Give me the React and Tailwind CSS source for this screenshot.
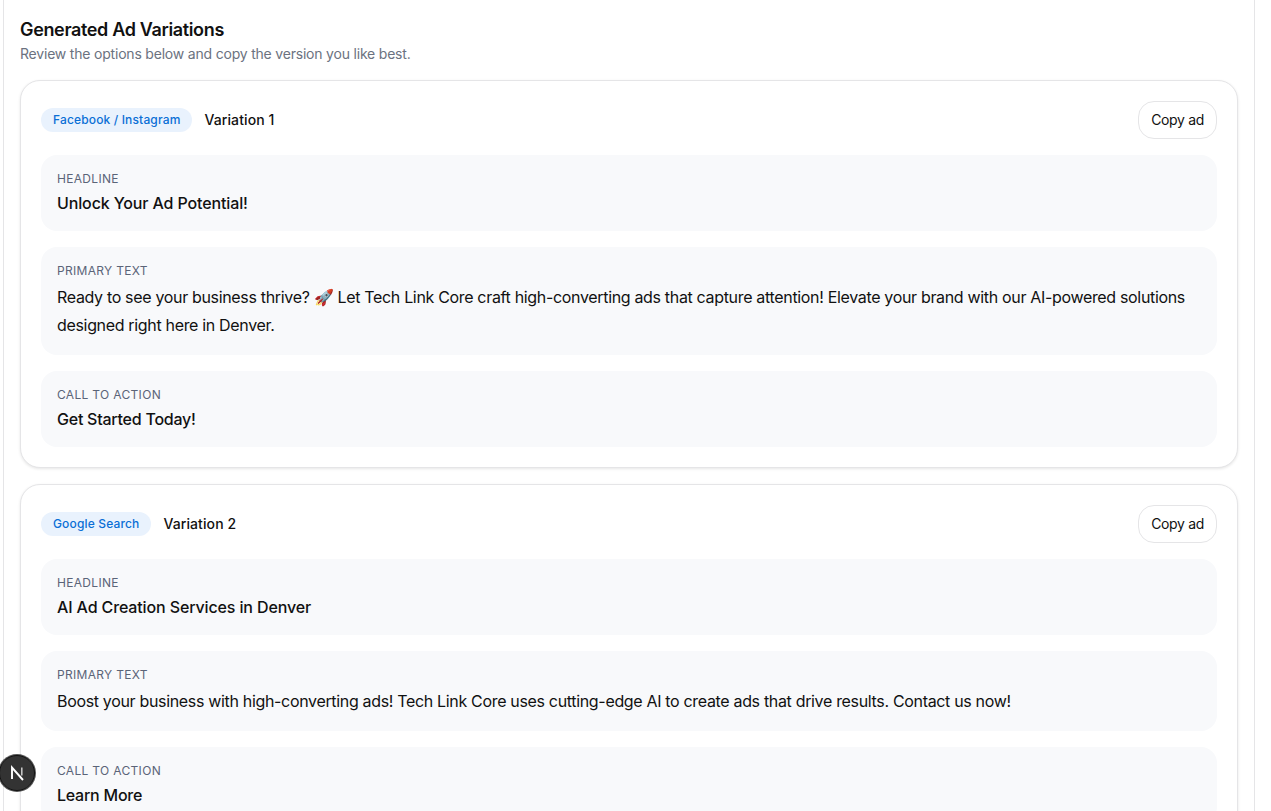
import React from "react";

const ads = [
  {
    platform: "Facebook / Instagram",
    name: "Variation 1",
    headline: "Unlock Your Ad Potential!",
    primary:
      "Ready to see your business thrive? 🚀 Let Tech Link Core craft high-converting ads that capture attention! Elevate your brand with our AI-powered solutions designed right here in Denver.",
    cta: "Get Started Today!",
  },
  {
    platform: "Google Search",
    name: "Variation 2",
    headline: "AI Ad Creation Services in Denver",
    primary:
      "Boost your business with high-converting ads! Tech Link Core uses cutting-edge AI to create ads that drive results. Contact us now!",
    cta: "Learn More",
  },
];

const Field = ({ label, children }) => {
  return (
    <div className="rounded-2xl bg-[#f8f9fb] p-4">
      <div className="text-xs leading-4 tracking-[0.32px] text-[#5b6478]">{label}</div>
      <div className="mt-1">{children}</div>
    </div>
  );
};

const AdCard = ({ ad }) => {
  return (
    <div className="flex flex-col gap-4 rounded-[20px] border border-[#e5e5e7] bg-white p-5 shadow-[0_1px_3px_rgba(0,0,0,0.1)]">
      <div className="flex items-center justify-between">
        <div className="flex items-center gap-3">
          <span className="rounded-full bg-[#e9f2fd] px-3 py-1 text-xs leading-4 font-medium tracking-[0.15px] text-[#0a6fd6]">
            {ad.platform}
          </span>
          <span className="text-sm font-medium tracking-[0.1px] text-[#111111]">{ad.name}</span>
        </div>
        <button className="h-[38px] rounded-2xl border border-[#e5e5e7] bg-white px-3 text-sm tracking-[-0.33px] text-[#111111]">
          Copy ad
        </button>
      </div>
      <Field label="HEADLINE">
        <p className="text-base leading-6 font-medium tracking-[-0.13px] text-[#111111]">{ad.headline}</p>
      </Field>
      <Field label="PRIMARY TEXT">
        <p className="text-base leading-7 tracking-[-0.33px] text-[#111111]">{ad.primary}</p>
      </Field>
      <Field label="CALL TO ACTION">
        <p className="text-base leading-6 font-medium tracking-[-0.24px] text-[#111111]">{ad.cta}</p>
      </Field>
    </div>
  );
};

const NextBadge = () => {
  return (
    <div className="fixed bottom-[20px] left-[-1px] flex h-9 w-9 items-center justify-center rounded-full border border-[#111111] bg-[#333333] shadow-[0_0_0_1px_#555555]">
      <svg width="18" height="18" viewBox="0 0 18 18" fill="none">
        <path d="M4 15V3.5L15 16" stroke="#ffffff" strokeWidth="1.9" />
        <path d="M13.8 3.5v8" stroke="#c4c4c4" strokeWidth="1.6" />
      </svg>
    </div>
  );
};

export default function App() {
  return (
    <div className="h-screen overflow-hidden bg-white font-['Inter',sans-serif]">
      <div className="mx-[3px] w-[1252px] border-x border-[#e5e5e7] px-4 pt-5">
        <h2 className="text-lg leading-5 font-semibold tracking-[-0.35px] text-[#111111]">Generated Ad Variations</h2>
        <p className="mt-1 text-sm leading-5 tracking-[-0.2px] text-[#6b7280]">
          Review the options below and copy the version you like best.
        </p>
        <div className="mt-4 flex flex-col gap-4">
          {ads.map((ad) => (
            <AdCard key={ad.name} ad={ad} />
          ))}
        </div>
      </div>
      <NextBadge />
    </div>
  );
}
